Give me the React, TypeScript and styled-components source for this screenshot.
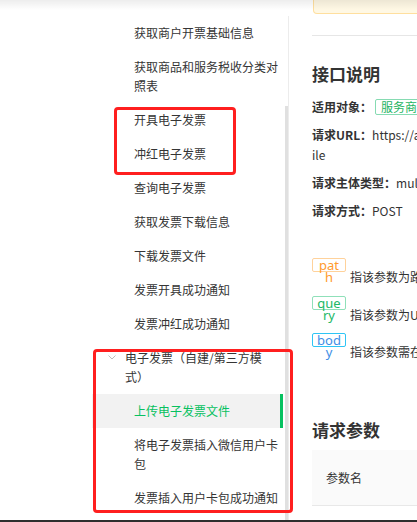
import styled, { createGlobalStyle } from "styled-components";

const GlobalStyle = createGlobalStyle`
  *, *::before, *::after { box-sizing: border-box; }
  html, body { margin: 0; padding: 0; background: #fff; }
  body {
    font-family: "Noto Sans CJK SC", "Noto Sans", sans-serif;
    font-size: 12px;
    color: #333;
    text-spacing-trim: space-all;
  }
`;

const Screen = styled.div`
  position: relative;
  width: 417px;
  height: 522px;
  overflow: hidden;
  display: flex;
  align-items: flex-start;
`;

const TopShade = styled.div`
  position: absolute;
  left: 0;
  right: 0;
  top: 0;
  height: 10px;
  background: linear-gradient(rgba(0, 0, 0, 0.07), rgba(0, 0, 0, 0));
  pointer-events: none;
`;

const BottomEdge = styled.div`
  position: absolute;
  left: 0;
  right: 0;
  bottom: 0;
  height: 2px;
  background: #2e2e2e;
`;

const Sidebar = styled.aside`
  flex: 0 0 289px;
  margin-top: 16px;
  height: 506px;
  border-right: 1px solid #ececec;
  display: flex;
`;

const Nav = styled.nav`
  width: 283px;
  padding-left: 92px;
`;

const Track = styled.div`
  width: 3px;
  margin-left: 2px;
  height: 100%;
  display: flex;
  flex-direction: column;
`;

const Thumb = styled.div`
  margin-top: 90px;
  flex: 1;
  background: #e0e0e0;
`;

const Item = styled.div<{ $active?: boolean }>`
  padding: 7px 0 8px 42px;
  line-height: 19px;
  border-right: 3px solid ${({ $active }) => ($active ? "#07c160" : "transparent")};
  background: ${({ $active }) => ($active ? "#f2f2f2" : "transparent")};
  color: ${({ $active }) => ($active ? "#07c160" : "#353535")};
`;

const GroupHeader = styled.div`
  display: flex;
  align-items: flex-start;
  gap: 9px;
  padding: 7px 3px 8px 16px;
  line-height: 19px;
  color: #353535;
`;

const Chevron = styled.svg`
  flex: 0 0 8px;
  margin-top: 7px;
`;

const Main = styled.main`
  flex: 0 0 720px;
  padding-left: 23px;
`;

const Notice = styled.div`
  height: 14px;
  margin-left: 1px;
  background: #fff8e4;
  border: 1px solid #ffdf9e;
  border-top: none;
  border-radius: 0 0 0 4px;
`;

const Divider = styled.div`
  margin-top: 21px;
  height: 1px;
  background: #e6e6e6;
`;

const SectionTitle = styled.h2<{ $top: number }>`
  margin: ${({ $top }) => $top}px 0 0;
  font-size: 17px;
  line-height: 24px;
  font-weight: 700;
  color: #333;
`;

const InfoList = styled.div`
  margin-top: 11px;
  display: grid;
  gap: 8px;
`;

const InfoLine = styled.p`
  margin: 0;
  line-height: 20px;
  color: #333;
`;

const Label = styled.strong`
  font-weight: 700;
`;

const Badge = styled.span`
  display: inline-block;
  margin-left: 3px;
  padding: 0 5px;
  line-height: 14px;
  border: 1px solid #86dbb2;
  border-radius: 2px;
  color: #1fb463;
`;

const TagList = styled.div`
  margin-top: 37px;
`;

const TagRow = styled.div`
  margin-bottom: 8.5px;
  line-height: 20px;
`;

const Tag = styled.span<{ $border: string; $color: string }>`
  display: inline-block;
  width: 34px;
  height: 14px;
  padding: 0 4px;
  border: 1px solid ${({ $border }) => $border};
  border-radius: 2px;
  color: ${({ $color }) => $color};
  font-family: "Noto Sans", sans-serif;
  font-size: 13px;
  line-height: 12px;
  text-align: center;
  word-break: break-all;
`;

const TagText = styled.span`
  margin-left: 4px;
  color: #333;
`;

const TableHead = styled.div`
  margin-top: 8px;
  display: grid;
  grid-template-columns: 150px 150px 150px 80px 1fr;
  height: 56px;
  align-items: center;
  background: #fafafa;
  border-bottom: 1px solid #e8e8e8;
`;

const HeadCell = styled.div`
  padding-left: 14px;
  color: #333;
`;

const Mark = styled.div<{ $x: number; $y: number; $w: number; $h: number }>`
  position: absolute;
  left: ${({ $x }) => $x}px;
  top: ${({ $y }) => $y}px;
  width: ${({ $w }) => $w}px;
  height: ${({ $h }) => $h}px;
  border: 3px solid #ff1f1f;
  border-radius: 4px;
  pointer-events: none;
`;

const items = [
  { label: "获取商户开票基础信息" },
  { label: "获取商品和服务税收分类对照表" },
  { label: "开具电子发票" },
  { label: "冲红电子发票" },
  { label: "查询电子发票" },
  { label: "获取发票下载信息" },
  { label: "下载发票文件" },
  { label: "发票开具成功通知" },
  { label: "发票冲红成功通知" },
];

const groupItems = [
  { label: "上传电子发票文件", active: true },
  { label: "将电子发票插入微信用户卡包" },
  { label: "发票插入用户卡包成功通知" },
];

const tags = [
  { name: "path", border: "#ffd29b", color: "#ff9a2e", text: "指该参数为路径参数" },
  { name: "query", border: "#8fe0b9", color: "#22b866", text: "指该参数为URL参数" },
  { name: "body", border: "#2ec5f5", color: "#3e8ee6", text: "指该参数需在请求JSON传参" },
];

export default function App() {
  return (
    <>
      <GlobalStyle />
      <Screen>
        <Sidebar>
          <Nav>
            {items.map((it) => (
              <Item key={it.label}>{it.label}</Item>
            ))}
            <GroupHeader>
              <Chevron width="8" height="5" viewBox="0 0 8 5">
                <polyline points="0.5,0.5 4,4 7.5,0.5" fill="none" stroke="#bdbdbd" strokeWidth="1" />
              </Chevron>
              <span>电子发票（自建/第三方模式）</span>
            </GroupHeader>
            {groupItems.map((it) => (
              <Item key={it.label} $active={it.active}>
                {it.label}
              </Item>
            ))}
          </Nav>
          <Track>
            <Thumb />
          </Track>
        </Sidebar>

        <Main>
          <Notice />
          <Divider />
          <SectionTitle $top={26}>接口说明</SectionTitle>
          <InfoList>
            <InfoLine>
              <Label>适用对象：</Label>
              <Badge>服务商</Badge>
            </InfoLine>
            <InfoLine>
              <Label>请求URL：</Label>
              https://api.mch.weixin.qq.com/v3/new-tax-control-fapiao/fapiao-applications/upload-f
              <br />
              ile
            </InfoLine>
            <InfoLine>
              <Label>请求主体类型：</Label>multipart/form-data
            </InfoLine>
            <InfoLine>
              <Label>请求方式：</Label>POST
            </InfoLine>
          </InfoList>

          <TagList>
            {tags.map((t) => (
              <TagRow key={t.name}>
                <Tag $border={t.border} $color={t.color}>
                  {t.name}
                </Tag>
                <TagText>{t.text}</TagText>
              </TagRow>
            ))}
          </TagList>

          <SectionTitle $top={56}>请求参数</SectionTitle>
          <TableHead>
            <HeadCell>参数名</HeadCell>
            <HeadCell>变量</HeadCell>
            <HeadCell>类型[长度限制]</HeadCell>
            <HeadCell>必填</HeadCell>
            <HeadCell>描述</HeadCell>
          </TableHead>
        </Main>

        <TopShade />
        <BottomEdge />
        <Mark $x={114} $y={107} $w={122} $h={68} />
        <Mark $x={93} $y={349} $w={200} $h={164} />
      </Screen>
    </>
  );
}
